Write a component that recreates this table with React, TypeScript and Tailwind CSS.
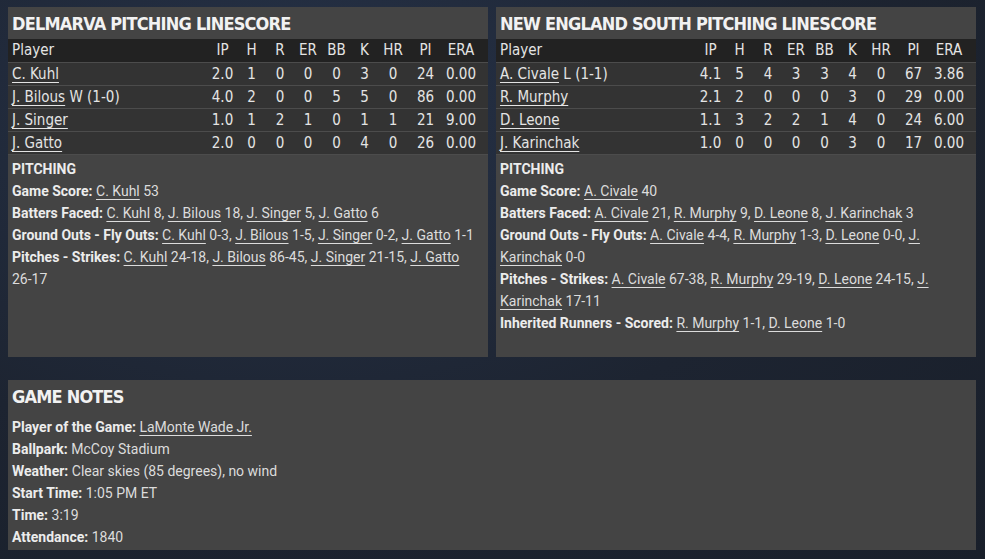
import React from 'react'

type Pitcher = {
    name: string
    note?: string
    ip: string
    h: number
    r: number
    er: number
    bb: number
    k: number
    hr: number
    pi: number
    era: string
}

type Part = string | { link: string }

const delmarva: Pitcher[] = [
    { name: 'C. Kuhl', ip: '2.0', h: 1, r: 0, er: 0, bb: 0, k: 3, hr: 0, pi: 24, era: '0.00' },
    { name: 'J. Bilous', note: 'W (1-0)', ip: '4.0', h: 2, r: 0, er: 0, bb: 5, k: 5, hr: 0, pi: 86, era: '0.00' },
    { name: 'J. Singer', ip: '1.0', h: 1, r: 2, er: 1, bb: 0, k: 1, hr: 1, pi: 21, era: '9.00' },
    { name: 'J. Gatto', ip: '2.0', h: 0, r: 0, er: 0, bb: 0, k: 4, hr: 0, pi: 26, era: '0.00' },
]

const newEngland: Pitcher[] = [
    { name: 'A. Civale', note: 'L (1-1)', ip: '4.1', h: 5, r: 4, er: 3, bb: 3, k: 4, hr: 0, pi: 67, era: '3.86' },
    { name: 'R. Murphy', ip: '2.1', h: 2, r: 0, er: 0, bb: 0, k: 3, hr: 0, pi: 29, era: '0.00' },
    { name: 'D. Leone', ip: '1.1', h: 3, r: 2, er: 2, bb: 1, k: 4, hr: 0, pi: 24, era: '6.00' },
    { name: 'J. Karinchak', ip: '1.0', h: 0, r: 0, er: 0, bb: 0, k: 3, hr: 0, pi: 17, era: '0.00' },
]

const delmarvaNotes: [string, Part[]][] = [
    ['Game Score', [{ link: 'C. Kuhl' }, ' 53']],
    ['Batters Faced', [{ link: 'C. Kuhl' }, ' 8, ', { link: 'J. Bilous' }, ' 18, ', { link: 'J. Singer' }, ' 5, ', { link: 'J. Gatto' }, ' 6']],
    ['Ground Outs - Fly Outs', [{ link: 'C. Kuhl' }, ' 0-3, ', { link: 'J. Bilous' }, ' 1-5, ', { link: 'J. Singer' }, ' 0-2, ', { link: 'J. Gatto' }, ' 1-1']],
    ['Pitches - Strikes', [{ link: 'C. Kuhl' }, ' 24-18, ', { link: 'J. Bilous' }, ' 86-45, ', { link: 'J. Singer' }, ' 21-15, ', { link: 'J. Gatto' }, ' 26-17']],
]

const newEnglandNotes: [string, Part[]][] = [
    ['Game Score', [{ link: 'A. Civale' }, ' 40']],
    ['Batters Faced', [{ link: 'A. Civale' }, ' 21, ', { link: 'R. Murphy' }, ' 9, ', { link: 'D. Leone' }, ' 8, ', { link: 'J. Karinchak' }, ' 3']],
    ['Ground Outs - Fly Outs', [{ link: 'A. Civale' }, ' 4-4, ', { link: 'R. Murphy' }, ' 1-3, ', { link: 'D. Leone' }, ' 0-0, ', { link: 'J. Karinchak' }, ' 0-0']],
    ['Pitches - Strikes', [{ link: 'A. Civale' }, ' 67-38, ', { link: 'R. Murphy' }, ' 29-19, ', { link: 'D. Leone' }, ' 24-15, ', { link: 'J. Karinchak' }, ' 17-11']],
    ['Inherited Runners - Scored', [{ link: 'R. Murphy' }, ' 1-1, ', { link: 'D. Leone' }, ' 1-0']],
]

// body copy is Roboto, the table and headings use a condensed face
const cols = 'grid grid-cols-[1fr_29px_29px_28px_28px_29px_27px_30px_35px_36px] pr-[9px] pl-[4px] items-center font-["DejaVu_Sans_Condensed",Roboto,sans-serif]'
const heading = 'h-[32px] px-[4px] flex items-center text-[18px] tracking-[-0.8px] font-bold text-[#f2f2f2] uppercase font-["DejaVu_Sans_Condensed",Roboto,sans-serif]'

function Link({ children }: { children: React.ReactNode }) {
    return <span className="underline underline-offset-[3px] decoration-1">{children}</span>
}

function Value({ text }: { text: string }) {
    // keep "26-17," together so the line never breaks on the hyphen
    const trimmed = text.trim()
    return (
        <>
            {text.startsWith(' ') && ' '}
            <span className="whitespace-nowrap">{trimmed}</span>
            {text.endsWith(' ') && ' '}
        </>
    )
}

function NoteLine({ label, parts }: { label: string; parts: Part[] }) {
    return (
        <p className="text-[14px] leading-[22px] text-[#dcdcdc]">
            <span className="font-bold text-[#ececec]">{label}:</span>{' '}
            {parts.map((p, i) =>
                typeof p === 'string' ? <Value key={i} text={p} /> : <Link key={i}>{p.link}</Link>
            )}
        </p>
    )
}

function Linescore({ title, pitchers, notes }: { title: string; pitchers: Pitcher[]; notes: [string, Part[]][] }) {
    return (
        <section className="bg-[#444444] h-[350px] flex flex-col">
            <h2 className={heading}>{title}</h2>

            <div className={cols + ' h-[23px] bg-[#222222] text-[15px] text-[#e4e4e4]'}>
                <span>Player</span>
                {['IP', 'H', 'R', 'ER', 'BB', 'K', 'HR', 'PI', 'ERA'].map(h => (
                    <span key={h} className="text-center">{h}</span>
                ))}
            </div>

            {pitchers.map(p => (
                <div key={p.name} className={cols + ' h-[23px] bg-[#333333] border-t border-[#4c4c4c] text-[15px] text-[#e4e4e4]'}>
                    <span className="whitespace-nowrap">
                        <Link>{p.name}</Link>
                        {p.note && <span> {p.note}</span>}
                    </span>
                    <span className="text-center">{p.ip}</span>
                    <span className="text-center">{p.h}</span>
                    <span className="text-center">{p.r}</span>
                    <span className="text-center">{p.er}</span>
                    <span className="text-center">{p.bb}</span>
                    <span className="text-center">{p.k}</span>
                    <span className="text-center">{p.hr}</span>
                    <span className="text-center">{p.pi}</span>
                    <span className="text-center">{p.era}</span>
                </div>
            ))}

            <div className="border-t border-[#4c4c4c] px-[4px] pt-[3px]">
                <p className="text-[14px] leading-[22px] font-bold text-[#ececec]">PITCHING</p>
                {notes.map(([label, parts]) => (
                    <NoteLine key={label} label={label} parts={parts} />
                ))}
            </div>
        </section>
    )
}

export default function App() {
    return (
        <div className="min-h-screen w-full bg-[#1d2431] bg-[radial-gradient(ellipse_at_30%_20%,#263248_0%,#1d2431_55%,#191f2a_100%)] pt-[7px] pl-[8px] pr-[9px] pb-[9px] font-[Roboto,sans-serif]">
            <div className="grid grid-cols-2 gap-[8px]">
                <Linescore title="Delmarva Pitching Linescore" pitchers={delmarva} notes={delmarvaNotes} />
                <Linescore title="New England South Pitching Linescore" pitchers={newEngland} notes={newEnglandNotes} />
            </div>

            <section className="mt-[23px] bg-[#444444] h-[170px]">
                <h2 className={heading}>Game Notes</h2>
                <div className="px-[4px] pt-[4px]">
                    <NoteLine label="Player of the Game" parts={[{ link: 'LaMonte Wade Jr.' }]} />
                    <NoteLine label="Ballpark" parts={['McCoy Stadium']} />
                    <NoteLine label="Weather" parts={['Clear skies (85 degrees), no wind']} />
                    <NoteLine label="Start Time" parts={['1:05 PM ET']} />
                    <NoteLine label="Time" parts={['3:19']} />
                    <NoteLine label="Attendance" parts={['1840']} />
                </div>
            </section>
        </div>
    )
}
